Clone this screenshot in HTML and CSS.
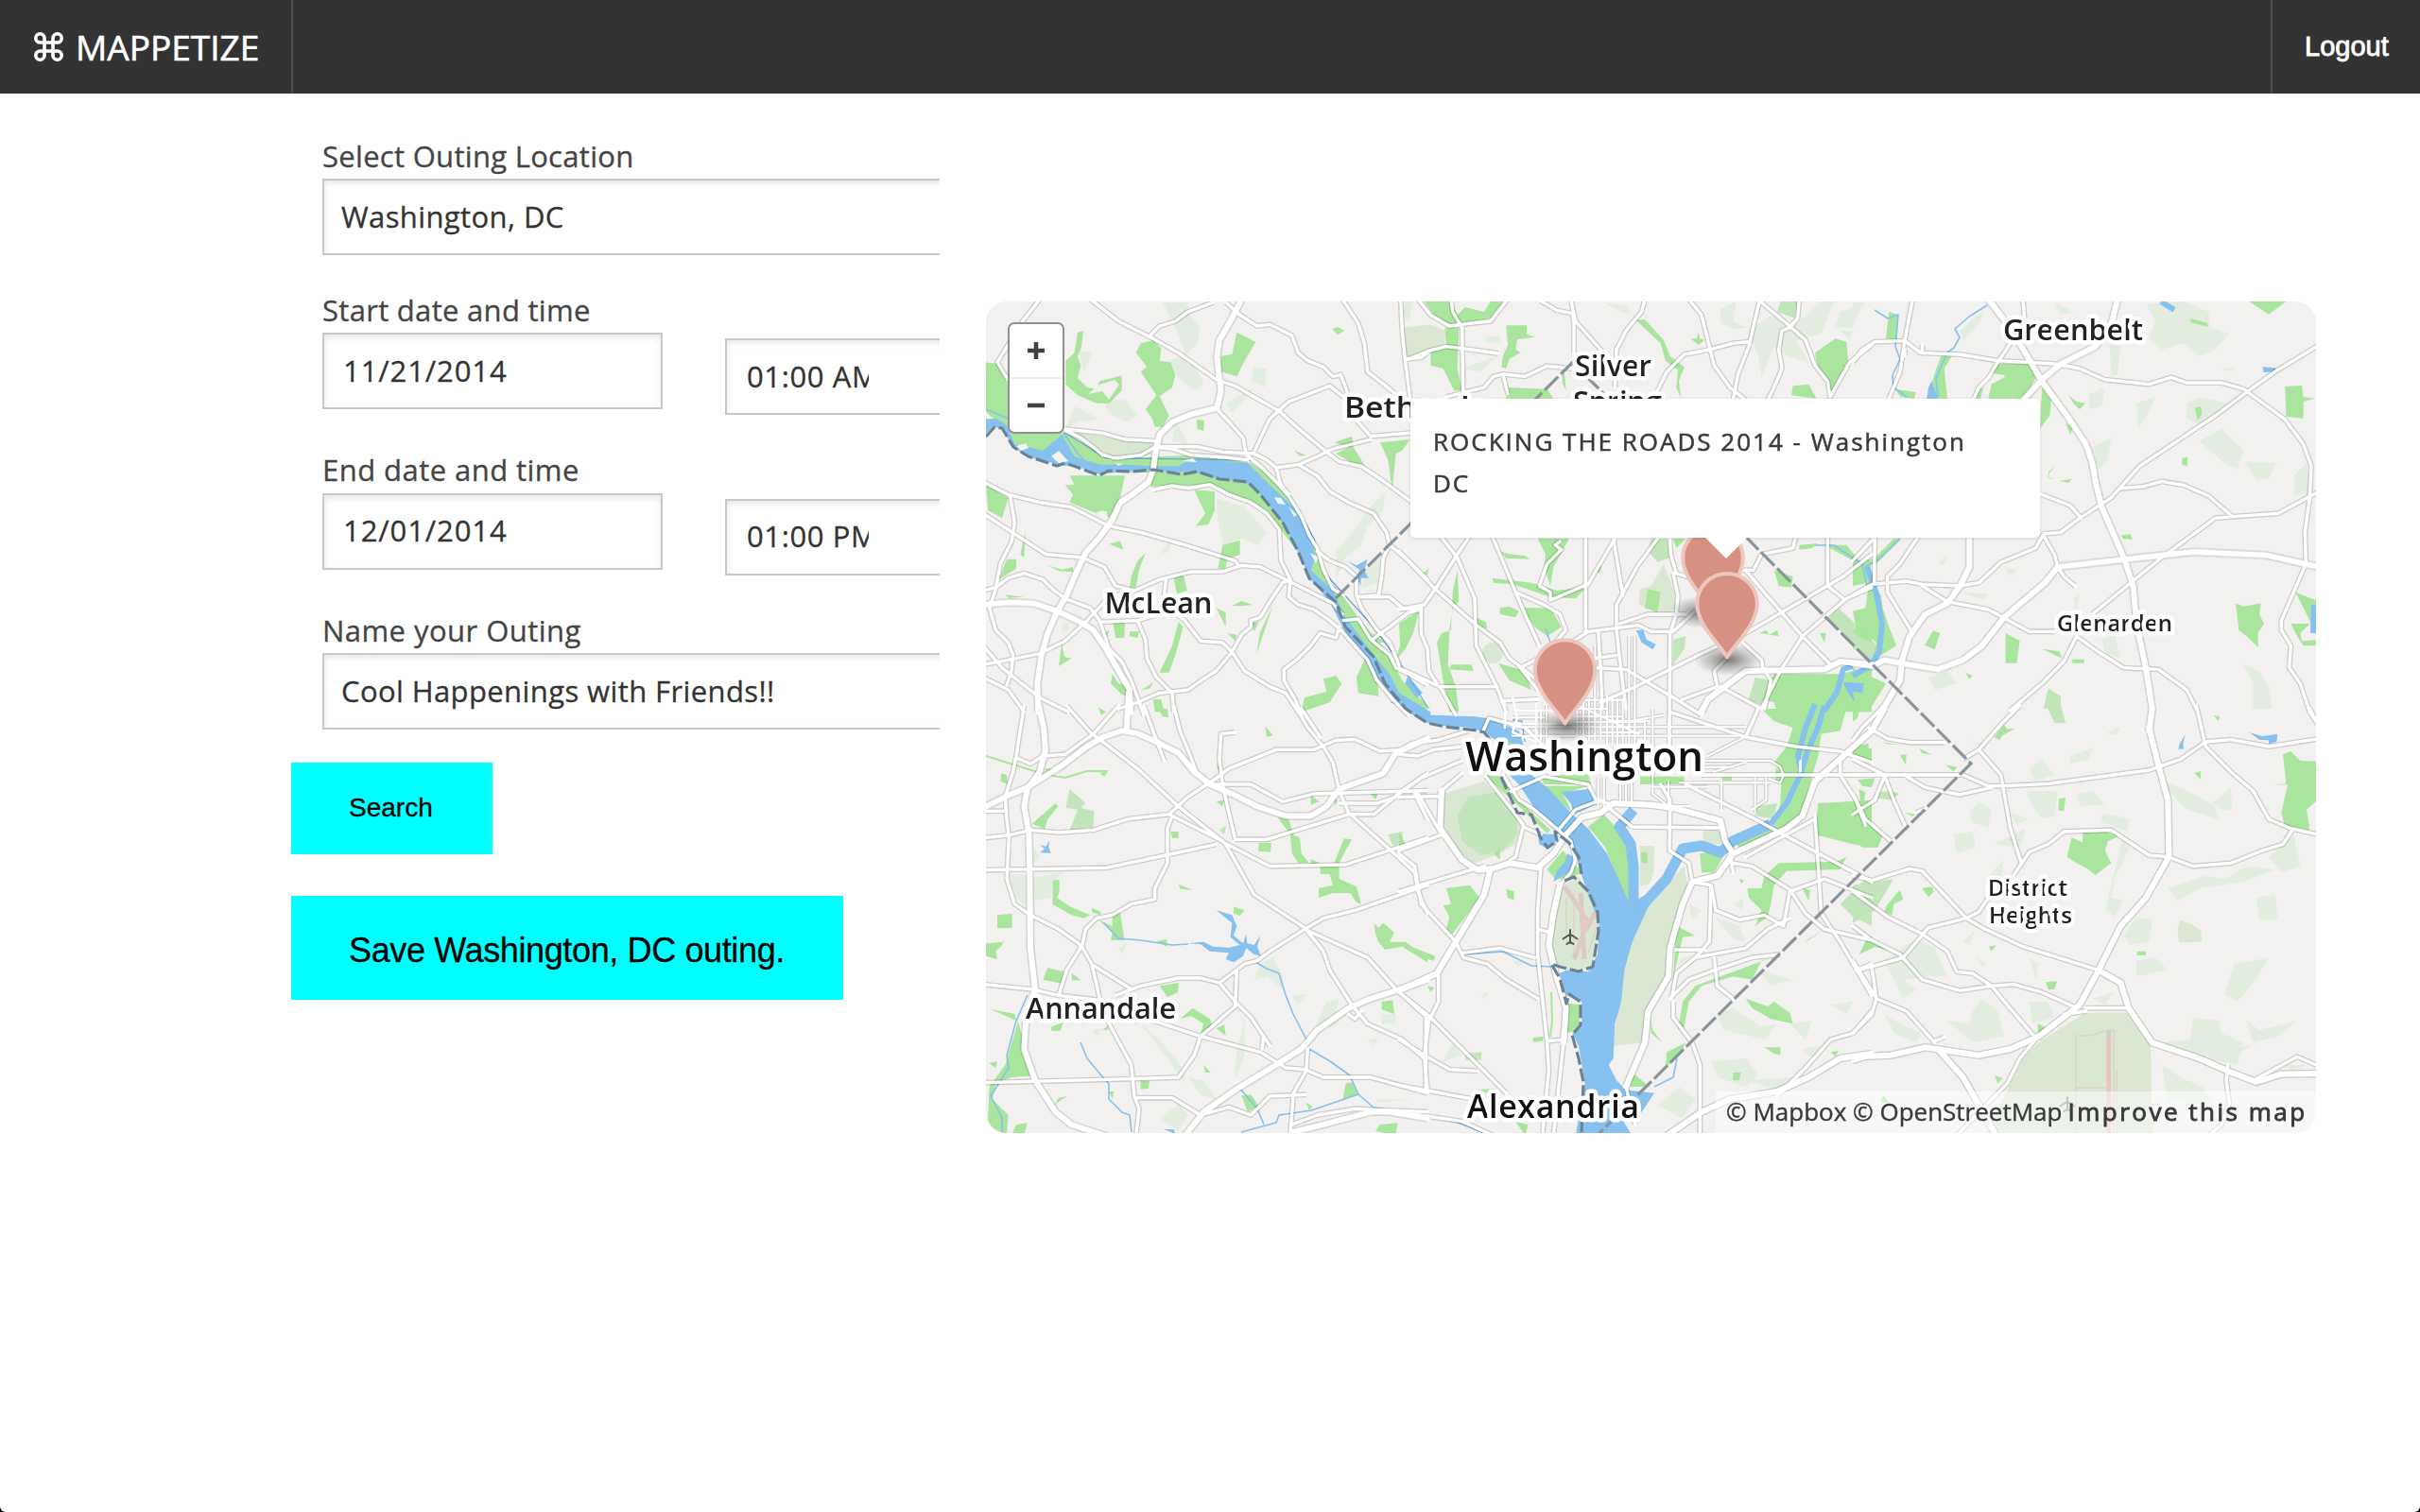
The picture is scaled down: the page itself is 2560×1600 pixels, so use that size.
FILE: index.html
```html
<!DOCTYPE html>
<html lang="en">
<head>
<meta charset="utf-8">
<title>Mappetize</title>
<link rel="stylesheet" href="styles.css">
</head>
<body>
<div class="page">
<header class="topbar">
  <a class="brand"><svg class="brand-icon" viewBox="0 0 31 31"><path d="M11 11V6.2A4.6 4.6 0 1 0 6.4 11H24.6A4.6 4.6 0 1 0 20 6.2V24.8A4.6 4.6 0 1 0 24.6 20H6.4A4.6 4.6 0 1 0 11 24.8Z"/></svg><span class="brand-name">MAPPETIZE</span></a>
  <a class="logout"><span>Logout</span></a>
</header>
<main class="content">
  <form class="outing">
    <div class="fields">
      <label class="caption">Select Outing Location</label>
      <input class="field wide" type="text" value="Washington, DC">
      <label class="caption spaced-first">Start date and time</label>
      <div class="pair">
        <input class="field date" type="text" value="11/21/2014">
        <input class="field time" type="text" value="01:00 AM">
      </div>
      <label class="caption spaced">End date and time</label>
      <div class="pair">
        <input class="field date" type="text" value="12/01/2014">
        <input class="field time" type="text" value="01:00 PM">
      </div>
      <label class="caption spaced">Name your Outing</label>
      <input class="field wide name" type="text" value="Cool Happenings with Friends!!">
    </div>
    <button type="button" class="btn search">Search</button>
    <button type="button" class="btn save">Save Washington, DC outing.</button>
  </form>
  <section class="map">
    <svg class="canvas" viewBox="1043 319 1407 880">
      <defs>
        <radialGradient id="shade"><stop offset="0" stop-color="#000" stop-opacity=".5"/><stop offset=".5" stop-color="#000" stop-opacity=".22"/><stop offset="1" stop-color="#000" stop-opacity="0"/></radialGradient>
        <g id="pin"><path d="M0 56.500C-6 45-31.800 23-31.800 0A31.800 31.800 0 0 1 31.800 0C31.800 23 6 45 0 56.500Z"/></g>
        <g id="major">
          <g transform="translate(1040 310) scale(.33333)">
            <path d="M820 20L790 80 750 150 742 200 748 260 755 310 742 365 660 385 600 410 560 450 548 500 540 560 525 600 480 635 435 665 410 720 370 775 325 825 290 900 265 960 235 1010 205 1080 185 1150 172 1240 175 1330"/>
            <path d="M0 990L80 982 160 985 235 1010 300 1040 350 1070 390 1130 430 1200 465 1260 468 1330"/>
          </g>
          <g transform="translate(1040 750) scale(.33333)">
            <path d="M175-15L192 60 198 130 180 200 140 255 130 310 145 390 148 520 150 760 165 890 135 1000 130 1080 165 1180 230 1280 280 1320 400 1360"/>
            <path d="M0 315L80 275 140 250 250 180 330 120 380 90 440 70 490 78 550 105 620 140 670 200 720 240 800 275 870 310 960 340 1040 340 1090 310 1130 255 1270 205 1310 140 1410 95"/>
            <path d="M462-50L455 70M640 1355L700 1280 800 1210 930 1130 1010 1080 1060 1020 1160 950 1230 920 1310 895 1410 860"/>
            <path d="M980 1345L1080 1320 1230 1280 1290 1280 1410 1300"/>
          </g>
          <g transform="translate(1480 310) scale(.33333)">
            <path d="M960 1330L980 1290 1100 1200 1350 1195 1400 1170 1500 1180"/>
          </g>
          <g transform="translate(1960 310) scale(.33333)">
            <path d="M430 20L500 110 565 220 600 280 680 390 740 480 760 540 770 600 790 680 860 840 890 930 900 1050 930 1190 950 1320 940 1390"/>
            <path d="M650 870L870 845 1080 822 1310 832 1435 860 1480 870M650 870L610 920 480 1030 410 1120 350 1165 270 1195 150 1175 100 1165 60 1185 0 1175"/>
            <path d="M840 20L820 100 770 170 660 225 600 275 545 335M370 770L370 870 340 930 300 985 230 1020 180 1090 155 1170 150 1230 90 1330"/>
          </g>
          <g transform="translate(1480 750) scale(.33333)">
            <path d="M0 895L120 840 180 740 270 590 290 510 350 490 440 505 490 460 530 400 580 345 640 330 680 300 800 305 870 315 1020 355 1035 420 1060 460"/>
            <path d="M1540 0L1500 70 1410 150 1320 230 1280 340 1230 380 1060 460 1010 530 930 550 900 620 860 760 855 850 790 960 780 1060 720 1200"/>
            <path d="M850 1355L960 1280 1050 1240 1200 1215 1300 1170 1400 1110 1500 1095M135 260L130 380 200 480 250 512 290 508"/>
            <path d="M510 560L490 650 475 750 500 850 530 950 522 1060"/>
          </g>
          <g transform="translate(1960 750) scale(.33333)">
            <path d="M940 60L970 180 1000 290 1003 470 930 600 850 690 780 830 720 940 590 1040 500 1080 400 1100 230 1075 120 1100 0 1105"/>
            <path d="M270 1080L350 1170 455 1355M780 830L850 870 875 950 950 1060 1100 1110 1190 1150 1280 1185 1360 1160 1480 1158"/>
          </g>
        </g>
        <g id="minor">
          <g transform="translate(1040 310) scale(.33333)">
            <path d="M180 20L125 90 45 220 78 275M340 20L430 90 530 140 620 190 740 275 800 295 860 330 940 375 1000 430 1090 505 1130 535 1200 550 1260 590 1410 700"/>
            <path d="M530 135L560 105 610 90 650 60 730 30M770 30L815 70 870 105 910 100 980 135 1000 190 1030 215 1080 235 1110 265 1135 260 1150 300 1190 410 1230 455 1410 440"/>
            <path d="M1140 20L1190 95 1210 160 1220 250 1290 305 1330 340M1325 20L1330 120 1340 220 1355 335M1340 210L1390 205 1410 190"/>
            <path d="M860 505L890 440 910 400 970 345 1100 295 1150 335M748 375L790 420 825 460 835 515 880 550 930 600 970 645 1010 710 1035 770 1060 810 1080 880 1110 940 1145 960"/>
            <path d="M262 438L310 460 350 490 380 515 420 525 500 515 545 490 600 495 660 515 740 520 840 530M548 470L450 465 380 445 260 432M560 488L680 488 760 505 860 510 900 530 930 555 1000 545 1060 520 1110 495 1230 465"/>
            <path d="M930 555L945 610 970 640M1000 545L1060 580 1100 630 1160 665 1240 700 1280 760 1290 800 1350 850 1410 910M1290 800L1270 840 1265 900 1255 960 1190 965"/>
            <path d="M1060 820L1100 850 1150 870 1185 900 1185 960 1200 1000 1250 1070 1290 1110 1320 1180M1200 965L1290 965 1330 1000 1390 1005 1350 1015 1290 1060 1235 1100M1145 1040L1190 1035 1230 1100 1290 1150 1310 1190 1350 1210 1410 1245"/>
            <path d="M0 600L80 640 180 665 280 680 400 740 500 760 640 800 800 850 810 865M0 700L100 765 200 830 315 840 385 870 420 930 480 945 560 910 660 885 760 885 820 865 880 870 960 910 1030 945 1110 985 1140 1020"/>
            <path d="M85 640L100 730 90 790 55 860 40 940 20 1000 40 1070 80 1110 95 1150 90 1200 75 1245M0 945L40 935 80 905 130 890 190 910 220 940 260 970 340 1000 370 1040 400 1130 440 1170 470 1230 510 1340"/>
            <path d="M0 1180L80 1165 180 1145 260 1105 330 1040 400 965 480 945M0 1120L60 1190 110 1230 180 1285 270 1330M0 1220L80 1260 130 1330M370 1045L490 1040 540 1025 600 1010 640 1040 690 1105 760 1110 790 1140 830 1200 910 1250 960 1270 1000 1330"/>
            <path d="M490 1040L515 1100 520 1160 550 1220 600 1270 605 1330M430 1320L490 1300 560 1270 650 1260 700 1225 740 1200 790 1140 820 1085 850 1060 850 1040 880 1030 910 980 950 920 965 915M580 910L575 960"/>
            <path d="M1130 1060L1120 1095 1070 1080 1040 1120 1000 1160 955 1195 955 1230 990 1290 1010 1340M540 625L600 612 650 620 720 608 780 640 850 665 900 700 940 750 945 850 975 910 970 965 1000 990 1050 1005 1100 1040 1140 1075 1180 1120 1220 1165 1250 1230 1300 1290 1350 1340"/>
          </g>
          <g transform="translate(1480 310) scale(.33333)">
            <path d="M60 20L100 70 160 105 240 95 290 90 345 20M165 20L170 60 200 110 203 310M30 210L90 185 150 170 230 180 315 192M150 330L270 300 300 265 330 258 400 265 470 232 550 240"/>
            <path d="M330 260L345 320M450 25L500 55 550 65 555 95 555 190M545 20L560 90 640 180 660 220M780 20L770 60 720 120 690 180 685 300M920 20L960 70 985 170 1000 230 1050 300 1100 340"/>
            <path d="M820 310L850 250 905 195 985 180 1060 160 1110 155M1145 20L1110 170 1075 260 1060 340M1150 30L1240 105 1290 150 1320 230 1360 280 1368 330 1430 220 1500 165M1270 20L1265 80 1240 110 1215 120 1205 180 1215 240 1190 300 1170 340"/>
            <path d="M0 820L115 940 240 1050 320 1110 350 1160 440 1230M130 770L185 840 240 970 245 1120 270 1170 310 1250 340 1330M225 770L185 830 115 940 80 990 0 1005M70 1000L70 1080 90 1130 95 1200 120 1240"/>
            <path d="M295 770L370 950 400 1020 445 1120M370 950L460 990 510 1020 530 1070 460 1150 385 1190 440 1260M510 790L495 800 515 815 470 860 445 930 480 950 480 975 600 925 620 890 685 780"/>
            <path d="M592 770L592 1080M680 780L710 960M820 780L755 870 690 990 690 1060M860 780L862 830 880 890 910 900 950 890M870 890L885 960 880 1020 860 1080 858 1400"/>
            <path d="M700 1050L790 1020 910 1020M470 1160L600 1075 760 1055 800 1075 870 1075 940 1010M632 1075L640 1200 645 1320M690 1065L700 1160 720 1320M690 1150L620 1160M620 1190L720 1195 880 1290 960 1340"/>
            <path d="M640 1300L750 1250 950 1150 1100 1080 1290 970 1410 900 1500 830M1100 880L1150 940 1280 1090 1370 1180M1090 1110L1150 1165 1155 1190 1180 1230 1160 1320M1040 1160L1000 1200 1010 1250 900 1290M1500 935L1420 970 1280 1090 1210 1200 1150 1320"/>
            <path d="M1090 880L1125 880 1150 830 1250 810 1260 770M1360 770L1360 930 1410 970M130 1250L310 1250M325 1295L440 1290M0 1190L130 1250 180 1340M1020 1250L1150 1320"/>
          </g>
          <g transform="translate(1960 310) scale(.33333)">
            <path d="M190 20L165 150 150 250 115 335M0 220L30 180 70 155 165 152 215 190 340 195 460 215 640 225 720 240 800 275 940 290 1010 268 1060 285 1170 285 1240 305 1370 400 1430 480 1455 550 1450 650 1435 760 1438 860 1360 1040 1360 1070 1390 1120 1385 1190 1420 1240 1450 1330 1480 1375M540 20L545 80"/>
            <path d="M500 160L460 220 430 270 400 300 385 335M1480 165L1340 250 1250 315 1150 390 910 550 820 650 720 715 660 760 605 765 580 810 470 855 400 920 340 930 220 925 170 915 60 925 0 960"/>
            <path d="M600 640L690 675 725 715M605 770L640 830 650 870 670 900 705 930M850 620L920 615 980 598 1050 610 1130 645 1205 710 1350 700 1480 630M1205 710L1150 715 980 840 760 1020M710 1090L670 1170 600 1240 500 1325"/>
            <path d="M220 930L300 980 430 1005 560 1075 640 1075M710 1090L780 1140 860 1190 970 1195 1060 1260 1095 1330M70 770L68 920M75 770L0 850M210 770L150 860 110 900 110 950 190 1080M165 180V200M220 165V190"/>
          </g>
          <g transform="translate(1040 750) scale(.33333)">
            <path d="M130-10L105 150 95 200 70 280 75 350 82 410 75 540 100 620 150 655 240 700 310 750 345 810 370 920 400 1000 470 1130 480 1230 495 1270 485 1355M105 155L150 175 190 150 260 145 350 80 430-10"/>
            <path d="M265-10L340 75 380 105 490 190 620 310 765 425 910 500 1150 495 1410 410M510-10L550 100 575 165M605-10L625 70 650 130 680 210M990-10L1030 60 1080 120 1110 170 1130 260 1160 330 1300 455 1370 520 1380 580 1410 650"/>
            <path d="M1010 0L1070 90M800 75L755 80 750 160 760 240 780 330 800 415M720 235L780 190 930 130 1050 130 1120 100 1180 97 1260 135 1330 130M730 240L850 240 950 295 1050 270 1410 260M0 325L75 325M0 410L80 402 150 385 240 393 350 385 460 350 590 335 650 280 710 240"/>
            <path d="M590 335L760 420M0 512L390 505 580 465 740 430M598 345L585 380 585 490 545 570 545 605 470 620 410 655 360 665 325 700 315 750 265 830 240 910M770 430L860 590 1020 695 1080 770 1100 830 1170 940 1220 1000 1330 1050 1400 1110"/>
            <path d="M800 415L900 415 1160 335 1240 335 1330 260 1410 205M1370 270L1410 350M1130 300L1250 300 1310 280M1410 560L1180 640 1080 665 1020 700 910 770 870 800 830 810 750 870 690 855 620 855 500 880 420 910M1020 700L1220 790 1310 890 1410 980"/>
            <path d="M350 815L470 890M0 875L150 890 240 910 370 925M540 990L690 1040 880 1090 960 1140 1020 1145 1080 1170 1230 1170 1410 1220M750 870L800 930 850 980 890 1040 910 1070M890 1040L885 1080M805 830L800 945 690 1040 670 1100 620 1170 470 1175 0 1187"/>
            <path d="M490 1235L600 1235 690 1290 780 1265 850 1290 910 1230 1025 1225M1030 1080L1025 1150 985 1220 975 1350M980 1320L1060 1290 1180 1270 1410 1280M1405 980L1405 1210M1160 970L1180 985 1200 960"/>
          </g>
          <g transform="translate(1480 750) scale(.33333)">
            <path d="M0 135L40 110 120 100 220 70M0 145L60 150 110 130 200 120M60 270L130 390M450 500L440 640 440 780 470 1060 475 1150 455 1355M275 215L350 310 395 370 370 470 340 490M395 375L450 400M330 210L380 290 430 320 500 380 545 420 560 480 545 520 510 560M522 1060L490 1355M510 380L560 320 640 290M530 400L590 340"/>
            <path d="M858 80L858 130M860 320L858 450 920 490 930 550 990 560 1005 640 1080 670 1160 655 1220 690 1240 580 1350 540 1500 600M1250 590L1290 650 1350 700 1500 735M860 920L920 860 1000 830 1120 790 1210 780M870 930L870 980 930 1060 955 1130 955 1355"/>
            <path d="M990 560L985 740 940 790 880 840 865 920M880 765L970 765M940 790L1100 760 1170 700 1240 665M1000 790L1010 880 1060 920M1060 490L1120 500 1250 580M1050 460L1060 520M1320 340L1340 650 1400 740 1500 910"/>
            <path d="M910 240L1130 350 1230 405 1500 550M1500 960L1440 1030 1370 1050 1290 1140 1200 1230M1450 830L1500 810M860 10L1100 90 1260 120 1400 135 1500 170M1140 0L1100 90M740 375L1020 378M660 310L740 375"/>
            <path d="M1400 160L1400 210 1450 290 1480 370M1320 350L1100 470M0 450L135 400M0 580L200 520 270 500M0 460L50 500 70 620 180 740 205 790 280 810 340 860 440 920M205 775L320 760 430 790M125 840L125 930 95 990 80 1100 90 1210M0 900L100 980 340 1220"/>
            <path d="M0 1050L80 1100 160 1145 250 1150M0 1195L240 1240M0 1280L200 1310 300 1355M470 1055L525 1050M440 700L480 710M0 280L130 278M0 270L70 220 200 165M200 205L135 260M265 75L285 30 400 60 450 110M1500 1100L1440 1120"/>
            <path d="M960 210L1510 210M720 1200L750 1320M350 265L460 215 600 240 625 290 680 305M830 240L860 290V330"/>
          </g>
          <g transform="translate(1960 750) scale(.33333)">
            <path d="M100-10L30 60 0 100M530-10L470 50 400 130 350 160M400 130L470 210 500 380 535 490 510 530M530 500L560 455 620 430 670 390 820 385 940 465 1000 470 1080 500 1200 490 1300 450 1365 430 1395 385"/>
            <path d="M0 210L350 210 430 245 480 245 620 238 940 195 970 185 1040 160 1120 105 1200 98 1320 120 1480 95M170 215L230 250 340 273 440 250M1090-10L1120 120 1200 200 1270 260 1320 350 1390 380 1480 400M1450 0L1480 55"/>
            <path d="M50 60L110 95 180 107 290 107M0 160L100 210 130 290 165 370M100 215L70 290 0 335M0 270L40 350 120 420M0 530L60 545 180 508 220 515 360 665 420 700 540 755 780 830M430 600L400 645 360 665 240 695 160 790 20 830"/>
            <path d="M0 580L110 660 220 715 300 770 330 835 380 840 440 880 490 940 580 1045M0 800L75 920 170 960 260 1060M60 820L75 920 60 970 0 1030M580 1050L530 1110 490 1190 440 1240 330 1355M740 950L870 950M700 945L600 900 510 875 440 880 340 895 220 860 150 780 60 735 0 690"/>
            <path d="M1280 1175L1410 1105 1480 1135M1190 1130L1185 1180 1195 1250 1170 1320 1130 1355M670 970L740 960M260 1055L290 1043M200 330L230 318"/>
          </g>
        </g>
        <g id="street">
          <g transform="translate(1600 680) scale(.33333)">
            <path d="M262 10V200M300 170V320M317 175V320M333 180V320M350 180V320M370-20V320M388-20V320M420 240V320M445 210V480L495 520M205 200V310M225 190V310M243 180V310M262 200V310M280 190V310M90 220V320M108 200V320M495 260V400"/>
            <path d="M0 182H70M230 182H350M180 210H300M200 235H345M320 248H430M0 238H100M0 268H740M0 296H740M200 252H420M280 285H400"/>
            <path d="M610 375H820L850 395 860 422 850 445 820 435M610 395H700M600 422H860M530 445H820M640 410L740 380M370 250L480 230M210 200L400 290M620 360L740 298M663 440V530M770 430V540M805 430V500L760 530M440 458H620"/>
            <path d="M272 430V520M290 430V520M342 440V510M360 440V510M378 440V520M495 440V520M380 515L560 520"/>
          </g>
          <path d="M1592 742V770M1600 738L1605 760 1600 775 1625 785M1625 745V778M1598 766H1645M1605 752H1645"/>
        </g>
      </defs>
      <rect class="land" x="1043" y="319" width="1407" height="880"/>
      <g class="wood">
        <path transform="translate(1040 310) scale(.33333)" d="M570 30H650L655 70 690 110 680 160 640 200 680 240 700 290 670 310 620 270 590 220 640 190 610 110ZM860 235L900 240 895 300 850 280ZM770 350L860 300 840 330 790 380ZM380 340L450 340 490 390 450 410 400 380ZM290 360L370 400 300 410 262 430ZM740 650L830 680 900 760 870 800 820 780 760 800 745 720ZM1275 630L1270 690 1220 740 1200 800 1150 840 1120 910 1120 820 1180 750 1220 690ZM610 400L650 480 600 470ZM300 180L345 190 320 250ZM250 1050L275 1045 270 1070 250 1080ZM560 830L600 780 590 820ZM1220 860L1260 840 1255 920 1200 940Z"/>
        <path transform="translate(1480 310) scale(.33333)" d="M20 27H45L30 90 10 70ZM650 30L720 40 740 70 690 55ZM1020 50L1070 27 1060 90 1110 110 1060 115 1020 95ZM1110 120L1180 70 1250 110 1340 27H1380L1340 130 1260 150 1300 220 1230 200 1190 170 1150 270 1140 200ZM1400 60L1470 40 1440 110 1380 110ZM200 240L310 200 260 250ZM275 140L320 135 320 155 275 158ZM1400 120L1440 120 1430 150Z"/>
        <path transform="translate(1960 310) scale(.33333)" d="M0 30H40L30 50 0 45ZM340 120L420 50 400 100 350 150ZM930 35L1050 27 1130 60 1135 110 1195 130 1150 180 1100 200 1050 160 980 180 940 140 960 90ZM640 30L700 60 660 70ZM815 160L850 170 840 260 820 265ZM900 350L960 330 940 380 905 430ZM1060 350L1100 330 1190 350 1110 420 1060 400ZM1100 470L1170 430 1240 500 1220 560 1180 540ZM1245 535L1345 540 1320 590 1280 595ZM760 490L820 460 810 530 780 560ZM750 320L800 300 790 360 750 370ZM1400 580L1440 540 1450 640 1400 640ZM270 860L300 830 290 865ZM480 870L520 880 500 900ZM340 950L430 955 420 975ZM1240 1180L1290 1200 1320 1250 1330 1320 1270 1320 1270 1240ZM240 1220L300 1200 330 1240 260 1260ZM790 1100L830 1080 850 1160 800 1140ZM700 970L720 950 710 1010ZM1165 240L1215 235 1200 250Z"/>
        <path transform="translate(1040 750) scale(.33333)" d="M80 525L140 530 135 630 105 600ZM150 540L260 515 230 540 215 600 160 610ZM860 860L880 810 920 790 950 850 950 890 900 850ZM1055 1010L1090 930 1130 920 1120 960 1170 960 1110 1010ZM560 1300L620 1255 650 1290 620 1340ZM650 1170L700 1180 745 1245 690 1225ZM500 1000L560 1050 640 1150 640 1190 570 1090ZM830 980L830 1100 800 1180 800 1120ZM345 1020L380 1015 360 1040ZM980 910L1025 905 1000 940ZM1220 1050L1255 1045 1240 1070ZM160 440L180 470 160 490ZM430 760L460 740 440 780ZM1265 970H1310V1000H1265ZM1240 1240L1350 1240 1260 1250Z"/>
        <path transform="translate(1480 750) scale(.33333)" d="M880 820L900 790 940 780ZM1000 660L1080 690 1100 740 1060 730ZM1060 620L1095 600 1090 640ZM1140 830L1250 860 1180 880ZM1010 970L1060 950 1150 1010 1200 1000 1160 1050 1030 1020ZM990 1120L1100 1110 1140 1160 1100 1200 1010 1170ZM140 1120L170 1060 200 1100ZM260 910L285 900 270 925ZM1240 1000L1310 990 1290 1050ZM1280 1080L1340 1070 1310 1110ZM1100 1180L1250 1170 1200 1210ZM820 1260L890 1200 940 1240 900 1300ZM1370 940L1440 930 1420 970ZM920 620L960 640 930 670ZM360 800L400 800 380 820Z"/>
        <path transform="translate(1960 750) scale(.33333)" d="M550 260L650 260 640 340 600 350 570 310ZM370 330L400 295 440 320 430 380 380 360ZM320 400L380 390 390 440 330 460ZM710 270L760 260 800 305 720 310ZM790 330L880 350 870 390 790 360ZM960 220L1010 240 1060 260 1150 310 1160 350 1060 320ZM1140 300L1200 250 1205 320 1170 320ZM800 80L850 55 840 80ZM370 100L440 140 410 110ZM560 190L600 160 640 210 580 230ZM690 150L760 125 750 160 690 175ZM860 400L880 440 830 540 820 600 860 610 830 660 800 640ZM1000 570L1120 530 1180 540 1250 500 1340 510 1240 550 1100 570 1030 610ZM1280 600L1340 590 1350 670 1290 670ZM1320 470L1400 400 1420 500 1360 520ZM1180 910L1210 810 1320 790 1280 860 1220 930ZM860 720L900 660 950 670 940 740 880 750ZM900 800L960 790 1000 830 900 850ZM1080 980L1160 990 1170 1030 1240 1060 1220 1130 1110 1110 970 1060 1070 1050ZM1250 990L1290 1020 1410 990 1350 1040 1270 1060ZM100 800L200 730 260 760 300 850 250 850 160 860 200 890 160 920ZM350 740L390 700 370 750ZM390 790L430 810 410 820ZM560 790L590 810 580 860ZM380 960L410 920 460 960 480 1040 380 1060 300 990 370 1000ZM560 930L620 930 640 980 570 1000ZM980 1130L1040 1170 1110 1200 1140 1260 1060 1250 1000 1240ZM430 530L480 480 470 540ZM450 430L550 380 530 440ZM500 330L560 350 520 370ZM1220 1080L1280 1060 1230 1090ZM760 920L830 900 800 940ZM1360 1130L1440 1130 1400 1150ZM100 970L150 1000 220 1030 200 1060 130 1030Z"/>
      </g>
      <g class="park-pale">
        <path transform="translate(1040 310) scale(.33333)" d="M290 440L430 465 540 475 530 515 420 522 350 490ZM1335 110L1410 105V190L1390 205 1340 205Z"/>
        <path transform="translate(1480 310) scale(.33333)" d="M20 110L100 100 145 120 145 165 90 180 60 200 20 205ZM800 930L840 860 870 940 880 1000 850 1020 760 990 765 940Z"/>
        <circle cx="1579" cy="691" r="11"/>
        <path transform="translate(1480 750) scale(.33333)" d="M520 560L570 535 620 610 635 680 615 825 530 830 480 800 490 650ZM905 500L915 560 870 720 855 850 790 970 775 1060 680 1070 690 980 715 830 745 720 800 600ZM140 270L270 230 330 290 385 370 370 430 320 460 240 490 190 460 140 370ZM765 435H810L808 520 795 555 765 565ZM965 385L1020 385 1025 430H965Z"/>
        <path transform="translate(1960 750) scale(.33333)" d="M740 965L870 965 945 1070 950 1355 420 1355 500 1190 540 1110 600 1050ZM1040 670L1085 690 1105 705 1108 740 1035 742 1030 700Z"/>
      </g>
      <g class="park-mid">
        <path transform="translate(1480 310) scale(.33333)" d="M1210 27H1265L1255 80 1200 60ZM800 780H850L860 840 820 855 790 820ZM1395 1000L1500 1100V1170L1360 1035ZM1130 1220L1180 1230 1155 1310 1110 1290ZM870 1100L910 1090 905 1130 870 1180Z"/>
        <path transform="translate(1040 750) scale(.33333)" d="M275 255L325 300 310 315 352 325 350 375 275 385 300 320 262 315ZM750 385L772 370 765 400ZM1285 400L1330 390 1333 425 1300 435Z"/>
        <path transform="translate(1480 750) scale(.33333)" d="M220 280L310 265 375 350V400L330 450 260 465 200 420 185 340ZM210 1095L262 1090 260 1115H210ZM1130 310L1200 300 1190 350 1130 340ZM1400 620L1480 540 1500 560V690L1440 660Z"/>
        <path transform="translate(1960 750) scale(.33333)" d="M0 560L130 540 70 640 0 680ZM615-10H660L675 45 640 45ZM75 260L140 265 130 290 80 285Z"/>
        <path transform="translate(1960 310) scale(.33333)" d="M620 1255L660 1280V1320H605ZM0 1050L70 1110 75 1160 0 1130Z"/>
      </g>
      <g class="park">
        <path transform="translate(1040 310) scale(.33333)" d="M0 220L55 225 78 270V440L0 370ZM300 125L318 120 312 170 300 200 310 230 300 270 330 300 360 305 370 280 410 270 440 262 440 310 400 350 360 350 300 325 262 290V215L290 190ZM500 160L540 150 565 175 560 215 595 220 610 260 600 300 560 328 590 390 570 425 545 425 535 395 515 370 550 325 500 250 520 235 485 190ZM805 125L865 155 830 215 805 265 755 250V200L790 195ZM1108 115L1125 108 1147 120 1125 133ZM678 402L702 405 700 438 680 432ZM1115 475L1170 455 1175 490 1210 545 1170 540 1120 510 1160 490ZM1260 475L1355 465 1330 500 1310 510 1298 625 1285 530ZM988 500L1025 515 1005 518Z"/>
        <path transform="translate(1040 310) scale(.33333)" d="M80 445L262 445 340 487 395 530 545 520 660 515 850 540 910 580 985 670 1060 810 1085 900 1140 960 1190 1030 1290 1150 1330 1230 1420 1320 1340 1320 1200 1120 1040 880 900 690 840 660 720 612 600 610 530 615 540 570 400 570 100 490ZM275 580L450 580 435 650 400 715 380 690 360 700 275 665 285 640 260 610 290 610ZM670 625L735 630V690L715 735 675 740 705 700ZM760 800L815 785V830L775 845 770 875H745ZM400 797L435 787 445 815ZM470 900L490 850 515 825 495 880 485 935H465ZM50 910L75 845H105V875ZM135 755L130 840 118 830ZM205 865L250 878 285 870 285 885 240 883ZM605 905L635 895 648 945 615 955ZM70 958L130 965 80 968ZM9 610L80 650 60 715 15 690Z"/>
        <path transform="translate(1040 310) scale(.33333)" d="M412 1045H450L448 1095H420ZM385 1080L400 1070 395 1090ZM465 1075H495L490 1095 465 1090ZM620 1045L635 1060 610 1150 590 1205H560L600 1120ZM740 1000L770 1015V1060ZM850 1045H875L860 1075ZM775 1080L805 1085 800 1105ZM790 993L820 978 855 990 820 994ZM920 990L868 1145 878 1080ZM250 1110L258 1155 280 1160 240 1185ZM540 1290H565L575 1330H545ZM410 1210L430 1240 480 1250 475 1285 440 1275 405 1240ZM500 1262L540 1235 530 1255ZM1210 1165L1250 1185 1255 1280 1190 1270 1185 1220ZM1080 1225L1120 1215 1138 1240 1100 1300 1010 1330 1020 1285 1090 1265ZM1385 1005L1365 1080 1340 1130 1310 1165 1340 1060ZM1235 1080L1275 1110 1250 1110Z"/>
        <path transform="translate(1480 310) scale(.33333)" d="M80 27H165L185 70 210 45 270 60 290 27H330L290 80 240 90 160 100 120 85ZM145 110H190L185 240 200 310H175L140 240 100 230V185L150 175ZM340 103H405V130L430 140 375 148 370 180 385 190 350 210 340 240 325 235 330 200 345 165ZM335 260L345 300 470 305 490 335H340ZM515 250L525 250 530 310 520 290ZM750 85H780L840 150 860 200 905 235 888 280 895 335 880 300 885 245 845 215 830 160ZM925 145L945 145 950 125 955 145 970 150 950 165ZM1320 190L1385 145 1420 155 1425 215 1368 320 1355 270 1330 240ZM1250 295L1300 290 1325 335 1245 325Z"/>
        <path transform="translate(1480 310) scale(.33333)" d="M440 780H540L490 870 480 930 460 870 465 830ZM320 820L345 828 400 835 415 845 340 842ZM295 905L420 920 500 945 600 930 560 970 480 965 360 925 300 920ZM75 890L95 875 90 895ZM185 880L190 980 170 1000 160 1070 155 1180 180 1250 190 1330H160L140 1230 120 1110 135 1080 165 1070 170 950ZM165 1180L230 1180 235 1200 160 1195ZM320 1000L350 995 380 1010 370 1030 320 1020ZM390 1000H480L515 1060 470 1090 430 1060ZM315 1175L400 1200 420 1260 350 1230ZM0 1050L60 1010 30 1090 5 1140ZM245 1030L275 1045 280 1065 245 1060ZM790 940L830 950 820 1015 780 1000ZM1190 880L1250 900 1245 935 1205 930ZM1270 800L1330 795 1310 810 1270 815ZM1145 1080L1165 1070 1175 1085 1200 1070 1205 1090ZM1335 1080L1355 1080 1350 1110ZM1440 1080L1500 980V1110ZM1190 1210L1400 1210 1500 1185V1330H1200L1190 1300 1150 1290ZM1350 800L1420 800 1500 900V930L1440 900V850ZM870 780H910L880 810ZM630 870L643 865 640 885 630 890Z"/>
        <path transform="translate(1960 310) scale(.33333)" d="M115 60L145 70 140 150 105 145ZM280 200H315L290 240 300 335H235L265 240ZM460 225H560L580 270 545 335H430L440 290 485 265 445 255ZM395 310L415 300 405 335H390ZM600 300L630 340 625 390 595 430ZM685 325L710 345 738 350 720 370 700 350ZM675 415L700 425 690 450ZM1085 365L1105 360 1108 385 1095 405ZM1372 297L1425 294 1430 330 1465 335 1430 345V398L1375 392ZM1045 525L1062 520V550L1045 545ZM645 548L625 570 620 585 640 590 618 588 622 568ZM655 598L695 590 685 602ZM1258 27H1375L1320 68ZM1070 80L1125 95 1128 107 1075 95ZM850 770L880 765 888 783 860 780Z"/>
        <path transform="translate(1960 310) scale(.33333)" d="M1215 985L1240 995 1295 985 1290 1020 1305 1050 1285 1080 1287 1125 1250 1090 1225 1070ZM1405 950L1480 980V1060L1455 1050 1440 1020ZM1390 1050L1450 1050 1420 1080 1425 1105 1480 1100V1120L1430 1120 1410 1090ZM485 1080L530 1105 520 1175H485ZM255 1072L277 1080 260 1132 228 1118ZM600 1130L655 1138 665 1160ZM697 1163H734V1175H697ZM357 1205L380 1215 370 1227ZM0 850L60 845 50 920 0 930ZM50 930L90 960 95 1000 115 1060 138 1120 90 1150 60 1165 75 1110 10 1060 0 1010 40 1000ZM130 780H155L70 865 60 850ZM0 1190L105 1240 50 1330H0ZM135 305L200 315 195 335 150 330Z"/>
        <path transform="translate(1040 750) scale(.33333)" d="M155 365L230 300 238 310 205 350 195 382ZM58 205L75 210 78 240 55 230ZM200 190H230L205 215 190 212ZM370 205L398 195 385 215ZM222 545L242 542V580L235 600 280 630 340 655 320 665 280 655 220 620ZM345 632L375 645 370 655 345 645ZM365 670L410 690V655L435 645 448 735H405L410 710ZM552 738L583 732V757ZM620 557L665 575 625 572ZM595 390H620V410H600ZM740 295L765 290 760 310ZM935 345L970 350 985 400 1005 410 1010 460 1035 490H1000L980 460 975 400ZM875 425H915L912 455 873 452ZM1145 412L1170 415 1150 450 1130 490V540L1185 565 1200 620 1185 615 1165 585H1110L1065 600V570L1110 560 1100 525H1070V500H1110L1130 450ZM1040 478L1070 490 1040 495Z"/>
        <path transform="translate(1040 750) scale(.33333)" d="M1040 275L1068 295 1040 305ZM1225 265H1255L1245 288ZM1270 680L1305 710 1290 740 1340 740 1410 790V805L1330 755 1275 765 1255 740 1245 715 1240 680 1255 695ZM795 628L830 640 815 657 795 650ZM45 655L92 650V695L45 697ZM9 745L65 740 68 725 60 750 40 770 45 795 9 785ZM205 822L255 835 250 872 190 860ZM280 838L310 862H282ZM560 880L620 870 618 900 585 915ZM625 985L665 950 720 985 730 1010 690 1030 700 1000 660 975ZM740 1015L765 1003 770 1038ZM700 1130L722 1155H705ZM215 1010L255 995 245 1023H218ZM135 905L110 990 130 1060V1110L165 1165 90 1170 40 1190 30 1240 80 1290 75 1355 40 1350 15 1310 20 1200 70 1130 100 1030ZM25 955L100 968 105 990 60 970ZM18 1125L45 1120 40 1140ZM500 1180L528 1182 525 1205 500 1208ZM820 1228L850 1225 875 1260 840 1280ZM1150 1190L1175 1185 1188 1225 1142 1240ZM1260 1320L1315 1315 1310 1355 1245 1340ZM895 55L920 85 900 90ZM365-5L390 10 375 20ZM555 0H585L588 28 570 25ZM1265 930L1300 925 1305 970 1265 955ZM225 1260L240 1235 270 1230 250 1240ZM105 1320L140 1315 130 1355H90ZM1110 285L1125 290 1118 310ZM400 1215L415 1215 410 1240ZM1025 1250L1045 1262 1035 1275ZM380 1020L400 1000 395 1020ZM740 175L752 185 750 205Z"/>
        <path transform="translate(1480 750) scale(.33333)" d="M600 375L650 335 700 390 730 460 732 620 700 560 655 440ZM455 245L600 245 520 270 550 330ZM450 215L600 205 610 240 460 240ZM270 210L330 215 380 290 480 385 470 395 380 310ZM300 90L360 95 365 115 310 120ZM150 570L225 560 255 600 240 620 170 715 150 700 160 660 140 625 165 620ZM340 572L365 580V608L345 600ZM0 740L115 785 110 800 70 790ZM535 935L575 940 570 1020 532 1030ZM425 1045L460 1040 455 1055 425 1058ZM955 460L1040 450 1000 520H960ZM470 510L520 450 580 520 540 540 495 540ZM1150 0H1420L1400 70 1340 80 1330 150 1300 250 1290 330 1250 370 1080 440 1060 420 1190 370 1210 300 1215 210 1190 170 1230 120 1250 60 1190 40ZM1330 300L1500 290V440L1440 430 1320 400ZM768 455H788V490H770Z"/>
        <path transform="translate(1480 750) scale(.33333)" d="M1205 490L1390 485 1420 470 1400 510 1230 515 1190 560 1180 620 1170 660 1130 690 1150 640 1110 600 1105 570 1150 570 1160 530ZM1450 130L1500 125V170L1440 150ZM1280 570L1305 575 1300 610ZM880 690L940 720 900 725 880 810 870 860ZM1210 780L1150 800 1120 860 1060 850 960 880 920 930 905 1010 885 1020 900 930 940 880 1020 850ZM1100 920L1170 945 1190 930 1240 965 1250 1000 1180 985 1120 950ZM795 970L805 1020 835 1060 800 1030ZM1160 1075L1210 1075V1100L1190 1095ZM1370 1090L1395 1085 1385 1105ZM1060 1155H1085L1080 1180H1060ZM740 1155L795 1200H735ZM850 1090L910 1060 890 1100 845 1140ZM765 215H905V240H765ZM1025 205H1055V228H1025ZM1195 190L1220 200 1220 230 1195 230ZM370 1310L410 1320 400 1355ZM240 1210L310 1205 300 1225ZM90 880L112 885 100 900ZM1285 740L1340 705 1300 735ZM1470 760L1500 720V750ZM1080 540L1095 545 1085 555ZM0 390L20 430 0 435ZM300 460L320 440 320 480Z"/>
        <path transform="translate(1960 750) scale(.33333)" d="M1365 145L1390 135 1420 165 1480 168V285L1440 320 1450 385 1370 370 1360 330 1380 240 1335 243 1375 238 1370 190ZM730 392L805 390 845 405 810 420 800 450 820 490 770 528 740 505 710 490 680 470 695 408 730 425ZM655 285L675 282 670 325 652 322ZM450 90L480 50 490 65 515 62 475 85 465 100ZM1085 205L1103 198 1105 225ZM1145 20L1165 25 1160 40ZM0 340L60 365 95 400 80 440 30 440 0 410ZM15 225L70 220 60 250 30 245ZM0 120L50 110V165L0 150ZM110 620L150 575 160 605 130 620 125 655 100 645ZM220 570L250 565 258 580 240 598ZM20 780L45 730 125 772 70 755ZM432 755L455 750 440 770ZM902 770H930V783H902ZM613 868L648 865 640 890 620 892ZM587 1000L610 1010 615 1020 587 1035ZM450 1165L475 1172 460 1190ZM150 148L170 145 168 178ZM0-10H25L15 30 0 40ZM88 105L155 115 110 112ZM210 125L250 145 220 142ZM295 178L330 185 320 200ZM165 330L200 335 190 342ZM20 255L40 265 35 300 25 300ZM125 265L148 270 130 280ZM95 1225L115 1250 90 1250Z"/>
        <path class="trail" d="M1043 800L1107 820 1127 823 1150 816 1171 816M1641 1050L1642 1080 1640 1097"/>
      </g>
      <path class="land" d="M1151 417L1163 407 1179 402 1184 407 1173 423 1166 414ZM1160 541L1171 541 1171 548ZM2112 396L2121 397 2110 403Z"/>
      <g class="water">
        <path transform="translate(1040 310) scale(.33333)" d="M0 400L45 400 75 420 100 480 190 500 250 450 290 520 370 545 460 545 540 550 620 550 660 525 840 540 900 600 985 680 1040 770 1055 840 1040 880 1110 945 1150 1030 1240 1150 1290 1210 1320 1270 1420 1330 1420 1370 1330 1320 1265 1240 1150 1080 1100 980 1035 905 1000 820 950 730 880 640 830 600 740 590 660 565 600 570 540 560 470 565 370 575 310 555 240 545 140 520 95 490 60 430 30 425 0 455ZM1155 850L1185 865 1220 845 1210 880 1222 905 1200 905 1198 930 1185 900 1195 880Z"/>
        <path transform="translate(1480 310) scale(.33333)" d="M752 1070L775 1070 785 1100 815 1115 805 1132 770 1110ZM25 1220L45 1235 75 1270 55 1285 20 1240ZM1410 1235L1475 1240 1470 1270 1440 1265 1445 1300 1420 1260Z"/>
        <path transform="translate(1960 310) scale(.33333)" d="M240 300L250 280 270 335H235ZM1300 235L1342 238 1340 250 1305 252Z"/>
        <path transform="translate(1040 750) scale(.33333)" d="M740 640L790 655 805 690 795 720 825 745 835 715 838 745 860 750 880 720 870 755 882 785 860 780 835 760 825 785 795 805 770 795 780 775 720 770 690 748 650 745 700 740 730 755 780 758 815 750 785 725 790 680ZM180 432L200 437 210 418 208 440 215 458 180 457 195 445ZM573 1335L605 1335 610 1350Z"/>
        <path transform="translate(1480 750) scale(.33333)" d="M-30-20L20-30 100 20 240 25 280 30 380 70 395 115 360 110 300 95 270 75 230 60 140 55 60 30 0-10ZM340 200L420 210 470 250 550 335 600 380 660 460 732 620 800 580 790 630 740 740 715 830 705 930 685 1000 680 1110 665 1130 690 1180 720 1210 810 1220 770 1280 700 1290 740 1355H560L590 1190 570 1070 550 1030 580 1010V930L530 910 510 840 530 830 600 835 630 780 635 680 600 590 580 530 560 460 520 410 440 330 380 240ZM515 265L600 255 630 300 590 320 555 335 545 300ZM440 395L500 400 495 430 470 445 445 430ZM490 550L500 515 525 490 535 460 552 470 550 510Z"/>
        <path transform="translate(1960 750) scale(.33333)" d="M1258 75L1300 88 1348 80 1345 105 1320 112 1320 100 1290 98ZM1055 82L1048 110 1050 128 1033 128 1038 110Z"/>
        <g class="streams">
          <path class="w9" d="M1960 705L1950 708 1943 733 1930 752M1975 600L1985 628 1991 660 1988 690 1978 705 1960 715M2286 319L2300 328M2448 640L2447 670"/>
          <path class="w33" d="M1728 857L1713 875 1725 893 1728 917 1728 957M1733 963L1763 930 1780 898 1800 895 1820 902 1833 890 1873 872"/>
          <path class="w9" d="M1873 872L1890 850 1903 823 1913 793 1923 770 1930 747M1907 823L1902 800 1910 770 1920 745"/>
          <path d="M1983 328L1997 337 2008 333 2005 367 2010 380 2002 397 2003 410 2017 420M2102 323L2083 335 2068 348 2073 357 2067 368 2060 373 2048 400 2050 420M1920 577L1940 577 1970 597 1975 620M2010 570L1987 592 1973 600M1043 433L1060 440 1070 445M1125 458L1140 480 1150 490M1168 977L1183 993 1207 995 1240 1000 1257 999M1328 1018L1340 1025 1353 1030 1360 1053 1368 1073 1382 1100M1385 1110L1407 1123 1428 1138 1437 1158 1453 1172 1510 1180M1143 1103L1150 1120 1165 1138 1173 1147 1173 1163 1187 1177 1195 1180 1197 1198M1313 1198L1350 1188 1353 1180 1387 1175 1437 1158M1312 1152L1330 1173 1337 1190M1087 1053L1075 1080 1065 1117 1067 1130 1048 1160 1060 1183V1199M1548 1010L1590 1007 1620 1022 1642 1023M1750 1150L1770 1140 1774 1120M1480 1175L1540 1187 1570 1199M1635 665L1640 680"/>
          <path class="shore" d="M1125 457L1170 485 1195 485 1325 487 1365 525 1390 570 1400 605 1450 660 1480 700 1510 748M1600 762L1610 763 1613 785"/>
        </g>
      </g>
      <path class="islet" d="M1075 472L1085 469 1088 474 1080 477ZM1112 483L1120 477 1130 488 1120 490ZM1348 526L1355 527 1360 534 1352 533ZM1363 536L1372 545 1369 547ZM1386 585L1395 590 1392 596ZM1250 488L1262 485 1266 489ZM1180 490L1188 491 1183 493ZM1903 805L1906 803 1906 817 1903 818Z"/>
      <g class="tarmac">
        <path d="M1655 938L1680 975 1665 1015M1672 945L1676 1015M1688 965L1677 985"/>
        <path class="hair" d="M1657 950V1000M1665 945V1010M1692 972L1680 1008M2196 1097V1199M2236 1090V1199M2239 1133V1199M2196 1151H2230"/>
        <path class="strip" d="M2230.700 1097V1199"/><path class="strip grey" d="M2230.700 1090V1097"/><path class="hair grey" d="M2196 1096L2210 1096 2230 1090 2236 1090"/>
      </g>
      <g class="casing"><use href="#street" class="s-street"/><use href="#minor" class="s-minor"/><use href="#major" class="s-major"/></g>
      <g class="road"><use href="#street" class="s-street"/><use href="#minor" class="s-minor"/><use href="#major" class="s-major"/></g>
      <path class="river-line" d="M1043 462L1052 452 1060 453 1072 473 1088 483 1118 493 1127 490 1163 503 1173 498 1197 499 1220 497 1250 502 1267 499 1290 507 1320 510 1333 523 1357 553 1373 583 1385 612 1413 637 1423 663 1453 695 1465 723 1487 750 1510 765 1528 769 1562 773 1570 775 1578 785M1588 822L1605 860 1620 862 1630 887 1637 897 1647 890 1645 880 1660 892 1670 907 1673 925M1655 932L1665 928 1680 943 1690 965 1691 985 1685 1023 1670 1028 1650 1023 1641 1020 1650 1035 1657 1062 1660 1052 1672 1060 1672 1085 1663 1095 1670 1120 1675 1145 1673 1199"/>
      <g class="district"><path d="M1413 633L1664 383L1676 373"/><path d="M1677 397L2085 808L1692 1199"/></g>
      <path id="jet" class="plane" d="M1661 984V998M1653.500 993.500L1661 988.500 1668.500 993.500M1657.500 999L1661 996.500 1664.500 999"/>
      <use href="#jet" class="plane dim" x="526" y="177"/>
      <g class="labels">
        <text x="1422" y="441.500" textLength="152" lengthAdjust="spacingAndGlyphs">Bethesda</text>
        <text x="1666" y="398" textLength="81">Silver</text><text x="1664" y="436" textLength="94">Spring</text>
        <text x="2119" y="360" textLength="148">Greenbelt</text>
        <text x="1168.500" y="649" textLength="114">McLean</text>
        <text x="1085" y="1077.500" textLength="159">Annandale</text>
        <text class="city" x="1550" y="816" textLength="252">Washington</text>
        <text class="town" x="1552" y="1182.500" textLength="182">Alexandria</text>
        <text class="small" x="2176" y="668" textLength="122">Glenarden</text>
        <text class="small" x="2103" y="947.500" textLength="84">District</text><text class="small" x="2104" y="976.500" textLength="88">Heights</text>
      </g>
      <g class="shadows"><ellipse cx="1828" cy="698" rx="36" ry="17"/><ellipse cx="1798" cy="648" rx="32" ry="17"/><ellipse cx="1658" cy="768" rx="36" ry="17"/></g>
      <g class="pins"><use href="#pin" x="1812" y="590.500"/><use href="#pin" x="1827" y="638.700"/><use href="#pin" x="1655.500" y="709"/></g>
    </svg>
    <div class="zoom"><span><svg viewBox="0 0 18 18"><path d="M0 9H18M9 0V18"/></svg></span><span><svg viewBox="0 0 18 18"><path d="M0 9H18"/></svg></span></div>
    <div class="popup"><p>ROCKING THE ROADS 2014 - Washington DC</p></div>
    <div class="credits"><span class="src">© Mapbox © OpenStreetMap</span><b>Improve this map</b></div>
  </section>
</main>
</div>
</body>
</html>
```
FILE: styles.css
```css
* { box-sizing: border-box; }
html { background: #000; }
body { margin: 0; font-family: "Open Sans", "Noto Sans", sans-serif; color: #333; }
.page { width: 2560px; height: 1600px; overflow: hidden; background: #fff; border-radius: 0 0 6px 6px; }

.topbar { display: flex; justify-content: space-between; height: 99px; background: #333; color: #fff; }
.brand { display: flex; align-items: center; width: 310px; padding-left: 36px; border-right: 2px solid #4d4d4d; font-size: 37px; }
.brand-icon { width: 31px; height: 31px; margin-right: 13px; fill: none; stroke: #fff; stroke-width: 3.6; }
.brand-name { line-height: 50px; -webkit-text-stroke: .6px #fff; }
.logout { display: flex; align-items: center; width: 158px; padding-left: 34px; border-left: 2px solid #4d4d4d; font-family: "Liberation Sans", Arial, sans-serif; font-size: 29px; -webkit-text-stroke: .8px #fff; }

.content { display: flex; align-items: flex-start; }
.outing { width: 686px; margin-left: 308px; padding-top: 44px; overflow: hidden; flex: none; }
.fields { padding-left: 33px; }
.caption { display: block; height: 46px; line-height: 45px; font-size: 31px; color: #444; letter-spacing: .3px; white-space: nowrap; -webkit-text-stroke: .3px #444; }
.caption.spaced-first { margin-top: 36px; }
.caption.spaced { margin-top: 36px; height: 46.500px; letter-spacing: .45px; }
.field { display: block; height: 81px; border: 2px solid #c8c8c8; border-radius: 0; background: #fff; box-shadow: inset 0 3px 6px rgba(0, 0, 0, .1); font: 31px "Open Sans", sans-serif; color: #333; letter-spacing: .4px; outline: 0; -webkit-text-stroke: .3px #333; }
.field.wide { width: 760px; padding: 0 18px 2px; }
.pair { display: flex; align-items: flex-start; width: 760px; height: 87px; }
.field.date { width: 360px; padding: 0 20px 2px; letter-spacing: .9px; }
.field.time { width: 300px; margin: 6px 0 0 66px; padding: 0 146px 2px 21px; letter-spacing: .6px; }
.btn { display: block; border: 0; background: #0ff; color: #000; font-family: "Liberation Sans", Arial, sans-serif; white-space: nowrap; text-align: left; }
.search { width: 213px; height: 97px; margin-top: 35px; padding: 0 61px 2px; font-size: 28px; -webkit-text-stroke: .3px #000; }
.save { width: 584px; height: 110px; margin-top: 44px; padding: 5px 61px 0; font-size: 36px; letter-spacing: -.37px; -webkit-text-stroke: .3px #000; }

.map { position: relative; width: 1407px; height: 880px; margin: 220px 0 0 49px; border-radius: 22px; overflow: hidden; flex: none; }
.canvas { display: block; width: 1407px; height: 880px; }
.land { fill: #f2f1f0; }
.wood { fill: #e2ede0; }
.park-pale { fill: #dae7d2; }
.park-mid { fill: #c3e5bb; }
.park { fill: #a9e59c; }
.trail { fill: none; stroke: #a9e59c; stroke-width: 2; }
.water { fill: #86c1ef; }
.streams { fill: none; stroke: #86c1ef; stroke-width: 1.6; stroke-linejoin: round; }
.w9 { stroke-width: 6; }
.w33 { stroke-width: 11; }
.shore { stroke: #6fa9d8; stroke-width: 1.3; }
.islet { fill: #f5f4f3; }
.tarmac { fill: none; stroke: #dec9c4; stroke-width: 5; }
.hair { stroke-width: 1; }
.strip { stroke: #e8c3bf; stroke-width: 4.500; }
.grey { stroke: #cfd0cc; }
.casing { fill: none; stroke: #000; opacity: .15; stroke-linejoin: round; }
.road { fill: none; stroke: #fff; stroke-linejoin: round; stroke-linecap: round; }
.casing .s-street { stroke-width: 13; }
.casing .s-minor { stroke-width: 18; }
.casing .s-major { stroke-width: 26; }
.road .s-street { stroke-width: 6; }
.road .s-minor { stroke-width: 10; }
.road .s-major { stroke-width: 18; }
#street > path { stroke-width: 2.5; }
.river-line { fill: none; stroke: #6c8396; stroke-width: 3.2; stroke-dasharray: 14 4; stroke-linejoin: round; }
.district { fill: none; stroke: #8a949d; stroke-width: 3.2; }
.district path { stroke-dasharray: 20 4; }
.plane { fill: none; stroke: #555; stroke-width: 2; stroke-linecap: round; stroke-linejoin: round; transform: translateY(-39px); transform: translate(0, 0); }
.dim { opacity: .6; }
.labels { font: 600 31px "Open Sans", sans-serif; fill: #222; stroke: #fff; stroke-width: 9; stroke-linejoin: round; paint-order: stroke; }
.labels .city { font-size: 43.500px; fill: #111; }
.labels .town { font-size: 34px; fill: #111; }
.labels .small { font-size: 24px; }
.shadows { fill: url(#shade); }
.pins { fill: #d69182; stroke: #ecc6bf; stroke-width: 4; stroke-linejoin: round; }

.zoom { position: absolute; left: 23px; top: 22px; width: 60px; height: 118px; border: 2px solid #8f8f8f; border-radius: 7px; background: #fff; display: flex; flex-direction: column; }
.zoom span { flex: 1; display: flex; align-items: center; justify-content: center; }
.zoom span + span { border-top: 2px solid #eee; }
.zoom svg { width: 18px; height: 18px; fill: none; stroke: #404040; stroke-width: 4.500; }

.popup { position: absolute; left: 449px; top: 103px; width: 666px; height: 147px; padding: 23px 60px 24px 24px; border-radius: 5px; background: #fff; box-shadow: 0 1px 4px rgba(0, 0, 0, .12); }
.popup::after { content: ""; position: absolute; left: 312px; top: 147px; border: 22px solid transparent; border-top-color: #fff; border-bottom: 0; }
.popup p { margin: 0; font-size: 26px; line-height: 44px; letter-spacing: 2px; color: #3a3a3a; -webkit-text-stroke: .5px #3a3a3a; }

.credits { position: absolute; right: 0; bottom: 0; width: 635px; height: 44px; padding: 0 0 3px 11px; display: flex; align-items: center; gap: 6px; background: rgba(255, 255, 255, .5); font-size: 26px; line-height: 40px; color: #3a3a3a; white-space: nowrap; -webkit-text-stroke: .4px #3a3a3a; }
.credits b { font-weight: 400; letter-spacing: 2.5px; -webkit-text-stroke: .9px #3a3a3a; }
```
